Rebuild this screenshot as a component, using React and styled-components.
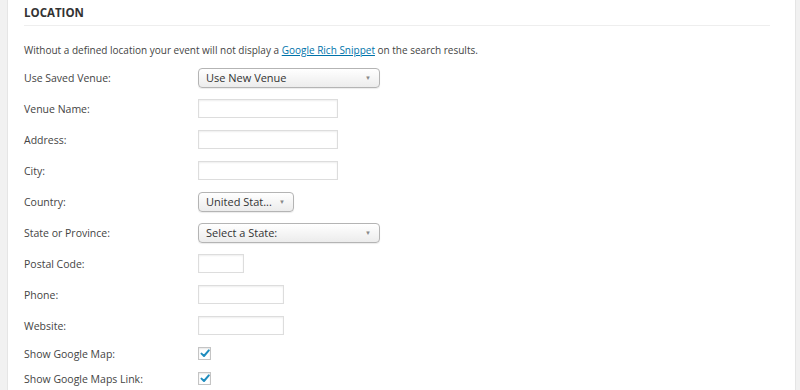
import styled, { createGlobalStyle } from "styled-components";

const GlobalStyle = createGlobalStyle`
  html, body {
    margin: 0;
    padding: 0;
    background: #f1f1f1;
    font-family: "Open Sans", "Liberation Sans", sans-serif;
  }
`;

const fields = [
  { label: "Use Saved Venue:", kind: "select", value: "Use New Venue", width: 182 },
  { label: "Venue Name:", kind: "input", width: 140 },
  { label: "Address:", kind: "input", width: 140 },
  { label: "City:", kind: "input", width: 140 },
  { label: "Country:", kind: "select", value: "United Stat...", width: 96 },
  { label: "State or Province:", kind: "select", value: "Select a State:", width: 182 },
  { label: "Postal Code:", kind: "input", width: 46 },
  { label: "Phone:", kind: "input", width: 86 },
  { label: "Website:", kind: "input", width: 86 },
  { label: "Show Google Map:", kind: "check" },
  { label: "Show Google Maps Link:", kind: "check" },
];

function Check() {
  return (
    <CheckBox>
      <svg width="10" height="9" viewBox="0 0 10 9">
        <path d="M1.5 4.6 L4 7 L8.8 1.4" fill="none" stroke="#1e8cbe" strokeWidth="2" strokeLinecap="round" strokeLinejoin="round" />
      </svg>
    </CheckBox>
  );
}

function Control({ field }) {
  if (field.kind === "select")
    return (
      <Select $w={field.width}>
        <span>{field.value}</span>
        <Arrow>▼</Arrow>
      </Select>
    );
  if (field.kind === "input") return <TextInput $w={field.width} />;
  return <Check />;
}

export default function App() {
  return (
    <>
      <GlobalStyle />
      <Panel>
        <Heading>LOCATION</Heading>
        <Intro>
          Without a defined location your event will not display a{" "}
          <a href="#">Google Rich Snippet</a> on the search results.
        </Intro>
        <Form>
          {fields.map((f) => (
            <Row key={f.label} $short={f.kind === "check"}>
              <Label>{f.label}</Label>
              <Control field={f} />
            </Row>
          ))}
        </Form>
      </Panel>
    </>
  );
}

const Panel = styled.div`
  margin-left: 7px;
  width: 789px;
  height: 390px;
  box-sizing: border-box;
  background: #fff;
  border-left: 1px solid #e5e5e5;
  border-right: 1px solid #e5e5e5;
  padding: 0 25px 0 16px;
  overflow: hidden;
`;

const Heading = styled.h3`
  margin: 0;
  padding-top: 5px;
  height: 20px;
  line-height: 16px;
  font-size: 11.5px;
  font-weight: 700;
  color: #333;
  border-bottom: 1px solid #eee;
`;

const Intro = styled.p`
  margin: 16px 0 4px;
  font-size: 10px;
  line-height: 16px;
  color: #444;

  a {
    color: #0073aa;
    text-decoration: underline;
  }
`;

const Form = styled.div`
  display: flex;
  flex-direction: column;
`;

const Row = styled.div`
  display: grid;
  grid-template-columns: 174px auto;
  align-items: center;
  justify-items: start;
  height: ${(p) => (p.$short ? 25 : 31)}px;
`;

const Label = styled.span`
  font-size: 10.5px;
  color: #444;
`;

const Select = styled.div`
  width: ${(p) => p.$w}px;
  height: 20px;
  box-sizing: border-box;
  display: flex;
  align-items: center;
  justify-content: space-between;
  padding: 0 8px 0 7px;
  border: 1px solid #b4b4b4;
  border-radius: 4px;
  background: linear-gradient(#fff, #ececec);
  box-shadow: 0 1px 1px rgba(0, 0, 0, 0.08);
  font-size: 11px;
  color: #333;
`;

const Arrow = styled.span`
  font-size: 6px;
  color: #888;
`;

const TextInput = styled.div`
  width: ${(p) => p.$w}px;
  height: 19px;
  box-sizing: border-box;
  border: 1px solid #ddd;
  background: #fff;
  box-shadow: inset 0 1px 2px rgba(0, 0, 0, 0.07);
`;

const CheckBox = styled.div`
  width: 13px;
  height: 13px;
  box-sizing: border-box;
  border: 1px solid #c4c4c4;
  background: #fff;
  box-shadow: inset 0 1px 2px rgba(0, 0, 0, 0.1);
  display: flex;
  align-items: center;
  justify-content: center;
`;
